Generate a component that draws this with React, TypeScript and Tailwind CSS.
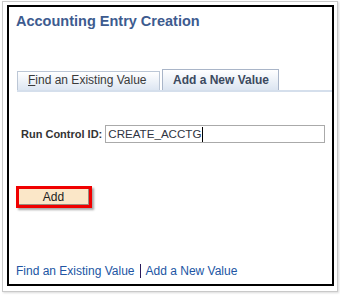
import React from "react";

export default function App() {
  const font = { fontFamily: '"Liberation Sans", Arial, sans-serif' };
  return (
    <div className="w-[340px] h-[295px] bg-white relative" style={font}>
      <div className="absolute left-[2px] top-[1px] w-[336px] h-[291px] border border-[#c9c9c9] bg-white shadow-[1px_1px_2px_rgba(0,0,0,0.15)]" />
      <div className="absolute left-[7px] top-[5px] w-[327px] h-[281px] border-2 border-black bg-white flex flex-col">
        <div className="pl-[7px] pt-[6px] text-[14.5px] leading-[17px] font-bold text-[#3d5b8f]">
          Accounting Entry Creation
        </div>
        <div className="mt-[39px] ml-[8px] flex items-end border-b-2 border-[#d5dfec]">
          <div className="h-[19px] w-[143px] border border-b-0 border-[#bcc7d6] bg-gradient-to-b from-white to-[#dde6f2] pl-[10px] text-[12px] leading-[17px] text-[#3a3a3a]">
            <span className="underline">F</span>ind an Existing Value
          </div>
          <div className="ml-[2px] h-[21px] w-[117px] border border-b-0 border-[#a9b5c8] bg-gradient-to-b from-white to-[#dce5f1] pl-[10px] text-[12px] leading-[20px] font-bold text-[#3c4a5f]">
            Add a New Value
          </div>
        </div>
        <div className="mt-[33px] ml-[12px] flex items-center">
          <span className="text-[11px] font-bold text-[#333] leading-[18px]">Run Control ID:</span>
          <div className="ml-[3px] w-[220px] h-[18px] border border-[#aaaaaa] flex items-center pl-[2px]">
            <span className="text-[11.6px] leading-[16px] text-[#2f3442]">CREATE_ACCTG</span>
            <span className="ml-[1px] w-[1px] h-[15px] bg-black" />
          </div>
        </div>
        <div className="mt-[43px] ml-[7px] w-[76px] h-[22px] border-[3px] border-[#f00000] shadow-[2px_2px_2px_rgba(0,0,0,0.35)]">
          <div className="w-full h-full bg-[#fbe7c8] border-r border-b border-[#9a8f80] flex items-center justify-center text-[12px] text-[#222]">
            Add
          </div>
        </div>
        <div className="mt-[56px] ml-[7px] flex items-center text-[12px] leading-[14px] text-[#2155a3]">
          <span>Find an Existing Value</span>
          <span className="mx-[5px] w-[1px] h-[14px] bg-[#2a1a5a]" />
          <span>Add a New Value</span>
        </div>
      </div>
    </div>
  );
}
